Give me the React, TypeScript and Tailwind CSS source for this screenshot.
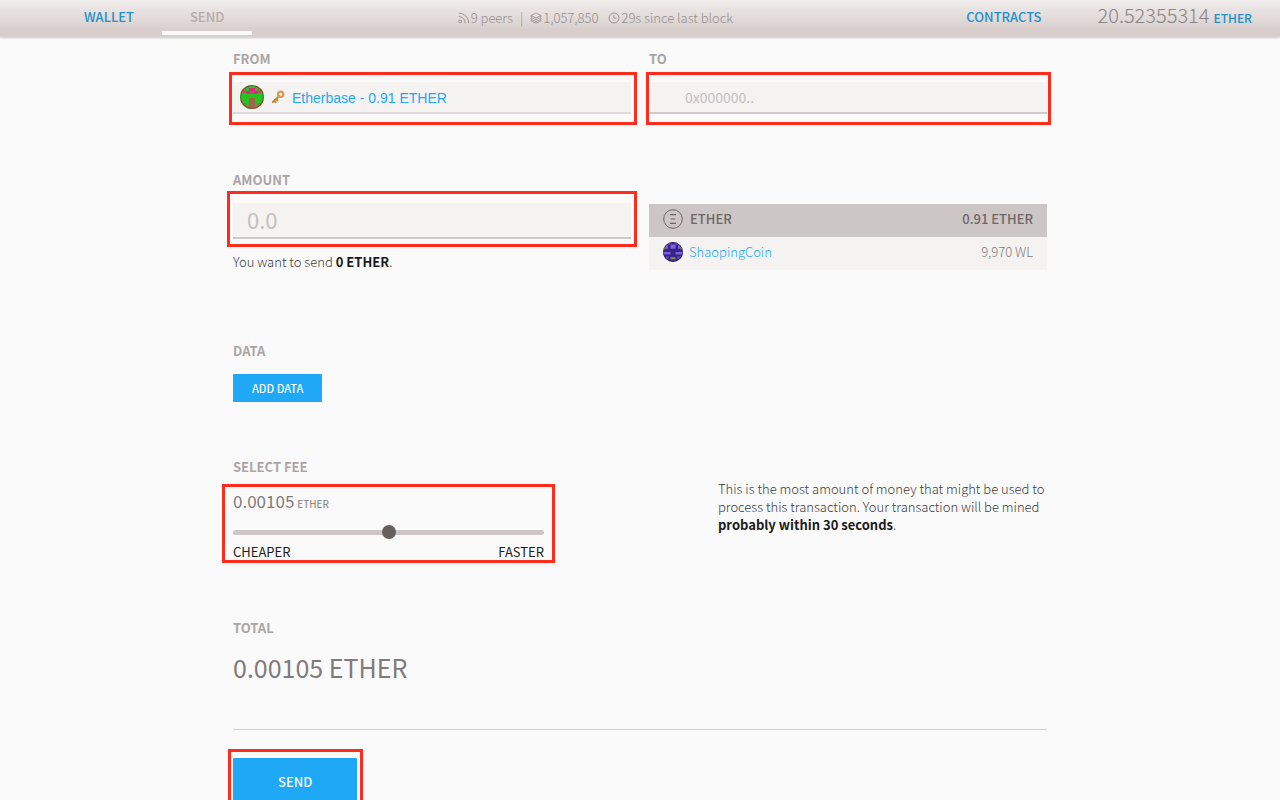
import { useState, type ReactNode } from 'react';

function Callout({ className }: { className: string }) {
  return <span aria-hidden="true" className={`pointer-events-none absolute border-[3px] border-[#fe2c1c] ${className}`} />;
}

function ForestIcon() {
  return (
    <svg viewBox="0 0 24 24" className="h-6 w-6" aria-hidden="true">
      <defs>
        <clipPath id="forest-clip">
          <circle cx="12" cy="12" r="12" />
        </clipPath>
      </defs>
      <g clipPath="url(#forest-clip)">
        <rect width="24" height="24" fill="#24c41f" />
        <path d="M0 0h9v3H0zM15 0h9v3h-9zM0 3h6v5H0zM18 3h6v5h-6zM0 15h3v4H0zM21 15h3v4h-3zM0 18h6v6H0zM18 18h6v6h-6zM6 21h12v3H6zM9 13h6v11H9zM10 6h4v3h-4z" fill="#a3624a" />
        <path d="M9 3h6v3H9zM6 6h4v3H6zM14 6h4v3h-4z" fill="#e3228d" />
      </g>
      <circle cx="12" cy="12" r="11.5" fill="none" stroke="#5c3020" strokeOpacity="0.45" />
    </svg>
  );
}

function CoinIcon() {
  return (
    <svg viewBox="0 0 24 24" className="h-5 w-5" aria-hidden="true">
      <defs>
        <clipPath id="coin-clip">
          <circle cx="12" cy="12" r="12" />
        </clipPath>
      </defs>
      <g clipPath="url(#coin-clip)">
        <rect width="24" height="24" fill="#38238a" />
        <path d="M6 0h3v3H6zM15 0h3v3h-3zM9 3h6v3H9zM3 4h3v4H3zM18 4h3v4h-3zM9 6h6v2H9zM0 12h9v3H0zM15 12h9v3h-9z" fill="#7a62d8" />
        <path d="M3 17h4v3H3zM17 17h4v3h-4z" fill="#5b44b4" />
        <path d="M0 6h3v3H0zM21 6h3v3h-3zM9 18h6v3H9z" fill="#7d8a23" />
      </g>
      <circle cx="12" cy="12" r="11.5" fill="none" stroke="#1d1150" strokeOpacity="0.4" />
    </svg>
  );
}

function KeyIcon() {
  return (
    <svg viewBox="0 0 14 14" className="h-3.5 w-3.5" fill="none" aria-hidden="true">
      <path d="M8.2 6 1.8 12M3.200 10.900l1.500 1.300M5.200 9l1.400 1.200" stroke="#c9873a" strokeWidth="2" strokeLinecap="round" />
      <circle cx="9.600" cy="4.300" r="2.700" stroke="#d69b4f" strokeWidth="2.200" />
    </svg>
  );
}

function EtherIcon() {
  return (
    <svg viewBox="0 0 20 20" className="h-5 w-5" fill="none" stroke="#6f6666" aria-hidden="true">
      <circle cx="10" cy="10" r="9.3" strokeWidth="1" />
      <path d="M7 5.7h6M7.600 10h4.800M7 14.300h6" strokeWidth="1.2" />
    </svg>
  );
}

function PeersIcon() {
  return (
    <svg viewBox="0 0 12 12" className="h-3 w-3" fill="none" stroke="currentColor" strokeWidth="0.9" aria-hidden="true">
      <circle cx="2.2" cy="9.4" r="1.4" />
      <path d="M1 4.6c3.400 0 6 2.600 6 6.200M1 1.200c5.400 0 9.600 4.200 9.600 9.600" strokeLinecap="round" />
    </svg>
  );
}

function LayersIcon() {
  return (
    <svg viewBox="0 0 12 12" className="h-3 w-3" fill="none" stroke="currentColor" strokeWidth="0.8" strokeLinejoin="round" aria-hidden="true">
      <path d="M6 1 11 3.500 6 6 1 3.500zM1 3.500v1.700l5 2.500 5-2.500V3.500M1 6v1.200l5 2.500 5-2.500V6M1 7.900v.9l5 2.500 5-2.500v-.9" />
    </svg>
  );
}

function ClockIcon() {
  return (
    <svg viewBox="0 0 12 12" className="h-3 w-3" fill="none" stroke="currentColor" strokeWidth="0.9" aria-hidden="true">
      <circle cx="6" cy="6" r="5" />
      <path d="M5.800 2.800v3.400h2.600" />
    </svg>
  );
}

function Heading({ children, htmlFor }: { children: ReactNode; htmlFor?: string }) {
  const style = 'block text-[13px] leading-[18px] font-bold text-[#aba5a5]';
  return htmlFor ? (
    <label htmlFor={htmlFor} className={style}>
      {children}
    </label>
  ) : (
    <h2 className={style}>{children}</h2>
  );
}

function Header() {
  return (
    <header className="relative flex h-[37px] justify-between bg-linear-to-b from-[#f0edec] to-[#d8cfcd] to-80% text-[13px] leading-[18px] shadow-[0_1px_2px_rgba(0,0,0,0.2)]">
      <nav className="flex pl-14 font-medium">
        <a href="#wallet" className="px-7 pt-2 text-[#2590c9]">WALLET</a>
        <a href="#send" aria-current="page" className="mb-0.5 border-b-4 border-[#fafafa] px-7 pt-2 text-[#b8abab]">SEND</a>
      </nav>
      <ul className="flex items-center pb-px font-light text-[#968e8e]">
        <li className="flex items-center gap-px"><PeersIcon />9 peers</li>
        <li aria-hidden="true" className="px-[7px]">|</li>
        <li className="flex items-center gap-px"><LayersIcon />1,057,850</li>
        <li className="flex items-center gap-px pl-2.5"><ClockIcon />29s since last block</li>
      </ul>
      <div className="flex">
        <a href="#contracts" className="px-7 pt-2 font-medium text-[#2590c9]">CONTRACTS</a>
        <p className="flex items-baseline gap-1 px-7 pt-[3px] text-xl leading-6 font-light text-[#8c8484]">
          20.52355314
          <span className="text-xs leading-none font-medium text-[#2590c9]">ETHER</span>
        </p>
      </div>
    </header>
  );
}

export default function App() {
  const [asset, setAsset] = useState('ether');
  const [fee, setFee] = useState(50);

  return (
    <div className="min-h-screen bg-[#fafafa] font-['Noto_Sans_CJK_SC','Source_Sans_Pro',sans-serif] text-[#1c1c1c]">
      <Header />
      <main className="mx-auto w-full max-w-[814px] pt-[13px]">
        <div className="grid grid-cols-2 gap-x-[18px]">
          <div>
            <Heading htmlFor="from">FROM</Heading>
            <div className="relative mt-3.5">
              <select
                id="from"
                className="block h-8 w-full appearance-none border-b-2 border-[#dedbdb] bg-[#f4f3f2] pt-0.5 pl-[59px] font-['Liberation_Sans',Arial,sans-serif] text-sm text-[#1fa8f5] outline-none"
              >
                <option>Etherbase - 0.91 ETHER</option>
              </select>
              <span className="pointer-events-none absolute inset-y-0 left-[7px] flex items-center gap-[7px] pb-0.5">
                <ForestIcon />
                <KeyIcon />
              </span>
              <Callout className="-top-2.5 -right-1.5 -bottom-[11px] -left-1" />
            </div>
          </div>
          <div>
            <Heading htmlFor="to">TO</Heading>
            <div className="relative mt-3.5">
              <input
                id="to"
                type="text"
                placeholder="0x000000.."
                className="block h-8 w-full border-b-2 border-[#cdcaca] bg-[#f4f3f2] pl-9 text-sm outline-none placeholder:text-[#c6bebe]"
              />
              <Callout className="-top-2.5 -right-1 -bottom-[11px] -left-[3px]" />
            </div>
          </div>
        </div>

        <div className="mt-[57px] grid grid-cols-2 gap-x-[18px]">
          <div>
            <Heading htmlFor="amount">AMOUNT</Heading>
            <div className="relative mt-3.5">
              <input
                id="amount"
                type="text"
                placeholder="0.0"
                className="block h-9 w-full border-b-2 border-[#cdcaca] bg-[#f4f3f2] pb-0.5 pl-3.5 text-[22px] outline-none placeholder:text-[#c6bebe]"
              />
              <Callout className="-top-3 -right-1.5 -bottom-2 -left-1.5" />
            </div>
            <p className="mt-3.5 text-[13px] leading-[18px] font-light text-[#3c3c3c]">
              You want to send <strong className="font-bold text-[#1c1c1c]">0 ETHER</strong>.
            </p>
          </div>
          <div role="radiogroup" aria-label="Asset" className="mt-[33px] text-[13px] leading-[18px]">
            <label className="relative flex h-[33px] items-center gap-[7px] bg-[#cdc6c6] px-3.5 pb-[3px] font-medium text-[#6f6666]">
              <input type="radio" name="asset" className="sr-only" checked={asset === 'ether'} onChange={() => setAsset('ether')} />
              <EtherIcon />
              ETHER
              <span className="ml-auto">0.91 ETHER</span>
            </label>
            <label className="relative flex h-[33px] items-center gap-1.5 bg-[#f4f3f2] px-3.5 pb-[3px] font-light text-[#827a7a]">
              <input type="radio" name="asset" className="sr-only" checked={asset === 'coin'} onChange={() => setAsset('coin')} />
              <CoinIcon />
              <span className="text-[#1fa8f5]">ShaopingCoin</span>
              <span className="ml-auto">9,970 WL</span>
            </label>
          </div>
        </div>

        <section className="mt-[71px]">
          <Heading>DATA</Heading>
          <button type="button" className="mt-3.5 block h-7 rounded-[1px] bg-[#1fa8f5] px-[19px] text-[11px] leading-4 font-medium text-[#f4fbff]">
            ADD DATA
          </button>
        </section>

        <section className="mt-14 flex justify-between">
          <div className="w-[311px]">
            <Heading htmlFor="fee">SELECT FEE</Heading>
            <div className="relative mt-[13px]">
              <p className="flex items-baseline gap-[3px] text-[17px] leading-6 text-[#827a7a]">
                0.00105 <span className="text-[10px] leading-none">ETHER</span>
              </p>
              <input
                id="fee"
                type="range"
                value={fee}
                onChange={(e) => setFee(Number(e.target.value))}
                className="mt-3 block h-3.5 w-full appearance-none bg-transparent outline-none [&::-webkit-slider-runnable-track]:h-[5px] [&::-webkit-slider-runnable-track]:rounded-full [&::-webkit-slider-runnable-track]:bg-[#cdc6c6] [&::-webkit-slider-thumb]:-mt-[5px] [&::-webkit-slider-thumb]:h-3.5 [&::-webkit-slider-thumb]:w-3.5 [&::-webkit-slider-thumb]:appearance-none [&::-webkit-slider-thumb]:rounded-full [&::-webkit-slider-thumb]:bg-[#675e5e]"
              />
              <p className="mt-1 flex justify-between text-[13px] leading-[18px]">
                <span>CHEAPER</span>
                <span>FASTER</span>
              </p>
              <Callout className="-top-[5px] -right-[11px] -bottom-0.5 -left-[11px]" />
            </div>
          </div>
          <p className="mt-[22px] w-[329px] text-[13px] leading-[18px] font-light text-[#3c3c3c]">
            This is the most amount of money that might be used to process this transaction. Your transaction will be mined{' '}
            <strong className="font-bold text-[#1c1c1c]">probably within 30 seconds</strong>.
          </p>
        </section>

        <section className="mt-[58px]">
          <Heading>TOTAL</Heading>
          <p className="mt-3 text-[25px] leading-9 text-[#827a7a]">0.00105 ETHER</p>
        </section>

        <div className="mt-11 border-t border-[#d2cfcf] pt-7">
          <div className="relative w-fit">
            <button type="button" className="block h-12 rounded-[1px] bg-[#1fa8f5] px-[45px] text-[13px] leading-[18px] font-medium text-[#f4fbff]">
              SEND
            </button>
            <Callout className="-top-[9px] -right-1.5 -bottom-[9px] -left-[5px]" />
          </div>
        </div>
      </main>
    </div>
  );
}
